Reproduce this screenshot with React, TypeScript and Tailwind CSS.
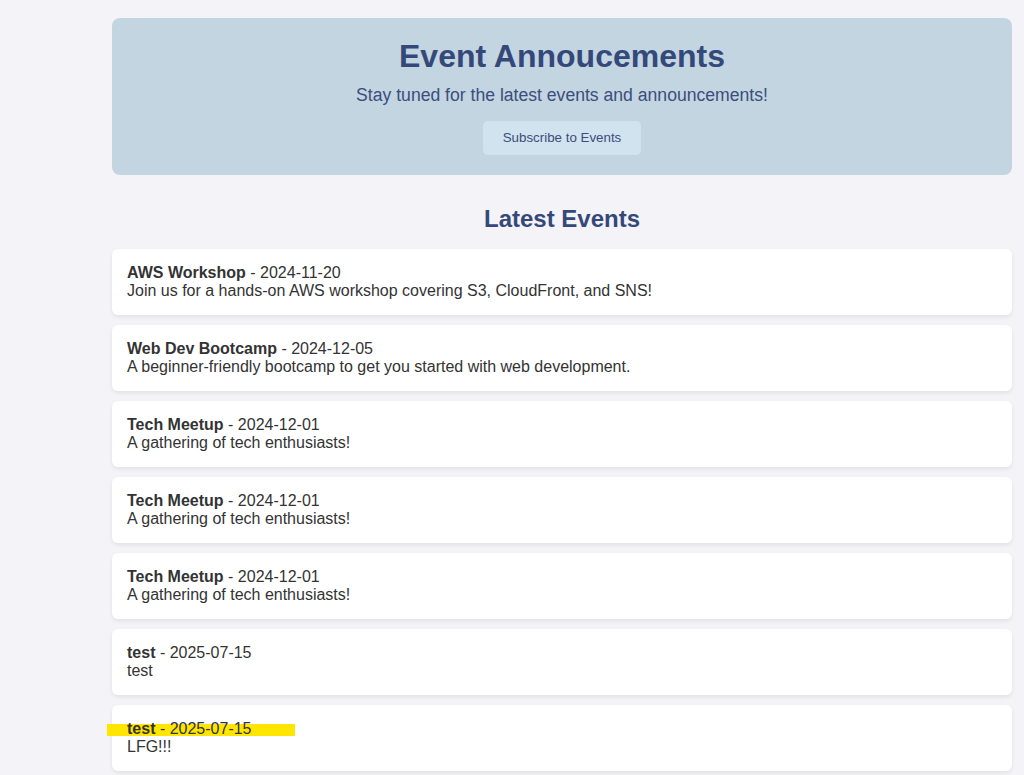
const EVENTS = [
  { title: "AWS Workshop", date: "2024-11-20", description: "Join us for a hands-on AWS workshop covering S3, CloudFront, and SNS!" },
  { title: "Web Dev Bootcamp", date: "2024-12-05", description: "A beginner-friendly bootcamp to get you started with web development." },
  { title: "Tech Meetup", date: "2024-12-01", description: "A gathering of tech enthusiasts!" },
  { title: "Tech Meetup", date: "2024-12-01", description: "A gathering of tech enthusiasts!" },
  { title: "Tech Meetup", date: "2024-12-01", description: "A gathering of tech enthusiasts!" },
  { title: "test", date: "2025-07-15", description: "test" },
  { title: "test", date: "2025-07-15", description: "LFG!!!", highlight: true },
];

export default function App() {
  return (
    <div className="min-h-screen bg-[#f4f4f8] pl-[112px] pr-[12px] pt-[18px] font-['Liberation_Sans',Arial,sans-serif] text-[#333]">
      {/* Header */}
      <header className="rounded-lg bg-[#c3d5e1] p-5 text-center">
        <h1 className="mb-[10px] text-[32px] font-bold leading-[37px] text-[#34497a]">
          Event Annoucements
        </h1>
        <p className="mb-[15px] text-[17.6px] leading-[21px] text-[#3b4d7c]">
          Stay tuned for the latest events and announcements!
        </p>
        <button className="h-[34px] rounded-[5px] bg-[#d0e3ef] px-5 text-[13.33px] leading-4 text-[#3b4d7c]">
          Subscribe to Events
        </button>
      </header>

      {/* Events list */}
      <h2 className="mt-[30px] mb-4 text-center text-2xl font-bold leading-7 text-[#34497a]">
        Latest Events
      </h2>
      <div className="flex flex-col gap-[10px] pb-1">
        {EVENTS.map((ev, i) => (
          <div
            key={i}
            className="relative rounded-md bg-white p-[15px] text-base leading-[18px] shadow-[0_2px_4px_rgba(0,0,0,0.08)]"
          >
            {ev.highlight && (
              <span className="absolute left-[-5px] top-[19px] h-3 w-[188px] bg-[#ffe600]" />
            )}
            <div className="relative">
              <strong>{ev.title}</strong> - {ev.date}
            </div>
            <div className="relative">{ev.description}</div>
          </div>
        ))}
      </div>
    </div>
  );
}
